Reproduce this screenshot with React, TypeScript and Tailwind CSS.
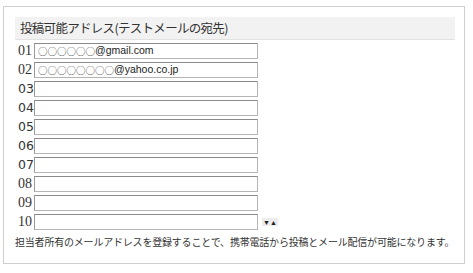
import React from 'react';

const rows = [
  { no: '01', serif: true, mark: '○○○○○○', mail: '@gmail.com' },
  { no: '02', serif: true, mark: '○○○○○○○○', mail: '@yahoo.co.jp' },
  { no: '03', serif: false, mark: '', mail: '' },
  { no: '04', serif: false, mark: '', mail: '' },
  { no: '05', serif: false, mark: '', mail: '' },
  { no: '06', serif: false, mark: '', mail: '' },
  { no: '07', serif: false, mark: '', mail: '' },
  { no: '08', serif: true, mark: '', mail: '' },
  { no: '09', serif: true, mark: '', mail: '' },
  { no: '10', serif: true, mark: '', mail: '' },
];

export default function App() {
  return (
    <div className="w-[473px] h-[273px] bg-white pt-[6px] pl-[3px]">
      <div className="w-[462px] h-[258px] border border-[#cfcfcf] pt-[10px] pl-[11px] pr-[9px]">
        <div className="h-[23px] bg-[#f2f2f2] border-b border-[#e2e2e2] flex items-center pl-[5px] text-[12.5px] tracking-[-0.7px] text-[#333] [font-family:'Noto_Sans_CJK_JP',sans-serif]">
          投稿可能アドレス(テストメールの宛先)
        </div>
        <div className="flex flex-col gap-[3px] mt-[3px]">
          {rows.map((r) => (
            <div key={r.no} className="flex items-center h-[16px]">
              <span
                className={`w-[16px] ml-[3px] text-[#333] leading-none ${
                  r.serif
                    ? "text-[14px] [font-family:'Liberation_Serif',serif]"
                    : "text-[12.5px] [font-family:'DejaVu_Sans',sans-serif]"
                }`}
              >
                {r.no}
              </span>
              <div className="w-[224px] h-[16px] border border-[#b5b5b5] border-t-[#8a8a8a] border-l-[#9a9a9a] px-[3px] flex items-center whitespace-nowrap text-[10.5px] text-[#222] [font-family:'Liberation_Sans',sans-serif]">
                {r.mark && (
                  <span className="text-[9.5px] text-[#444] [font-family:'Noto_Sans_CJK_JP',sans-serif]">{r.mark}</span>
                )}
                {r.mail}
              </div>
              {r.no === '10' && (
                <span className="ml-[4px] bg-[#ececec] px-[1px] h-[8px] flex items-center text-[7px] leading-none text-[#222]">
                  ▼▲
                </span>
              )}
            </div>
          ))}
        </div>
        <p className="mt-[4px] whitespace-nowrap text-[10px] tracking-[-0.2px] text-[#333] [font-family:'Noto_Sans_CJK_JP',sans-serif]">
          担当者所有のメールアドレスを登録することで、携帯電話から投稿とメール配信が可能になります。
        </p>
      </div>
    </div>
  );
}
